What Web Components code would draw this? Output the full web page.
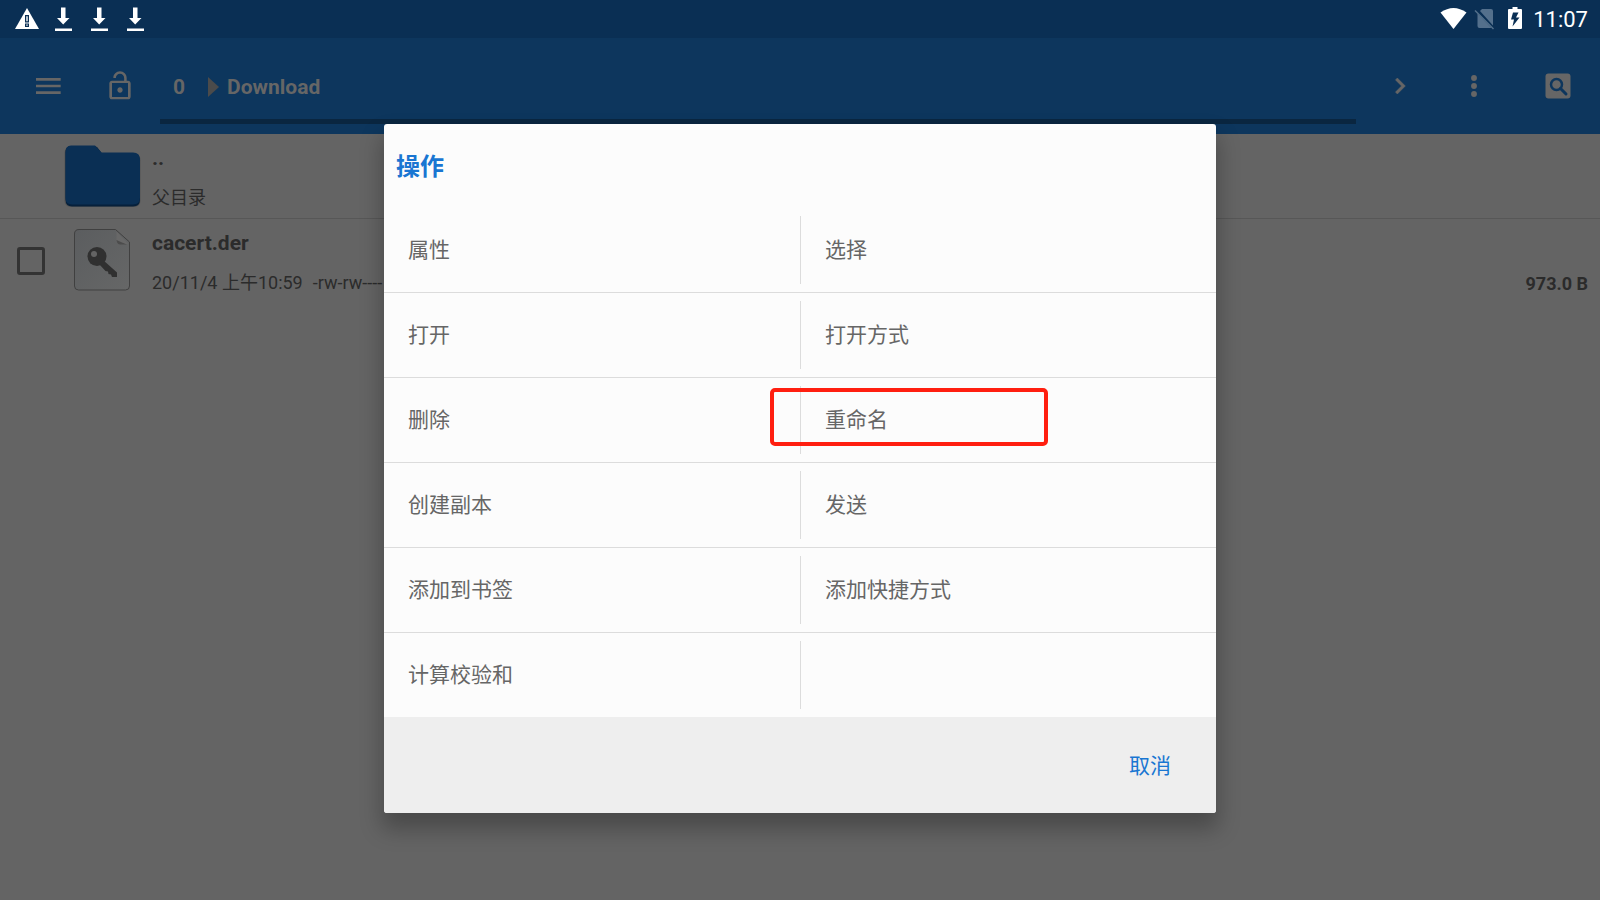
<!DOCTYPE html>
<html lang="zh-CN">
<head>
<meta charset="utf-8">
<meta name="viewport" content="width=device-width, initial-scale=1">
<title>Download</title>
<style>
  html, body { margin: 0; height: 100%; }
  body {
    background: #646464;
    font-family: Roboto, "Noto Sans CJK SC", sans-serif;
    overflow: hidden;
  }
</style>
</head>
<body>
<file-manager></file-manager>

<template id="t-manager">
  <style>
    :host { display: flex; flex-direction: column; min-height: 100vh; position: relative; }
    main { flex: 1; }
  </style>
  <status-bar></status-bar>
  <app-bar></app-bar>
  <main>
    <file-row divided>
      <svg slot="icon" width="80" height="72" viewBox="-1 -4 80 72" aria-hidden="true">
        <path d="M8 3.500h24l7 7.500h32q6.500 0 6.500 6.500v40q0 6.500-6.500 6.500H8q-6.500 0-6.500-6.500V10q0-6.500 6.500-6.500z" transform="translate(0 -1)" fill="#3c3c3c" opacity=".4"/>
        <path d="M8 2h23q2 0 3.500 1.500L39 9.500h31q7 0 7 7v39q0 7-7 7H9q-6.500 0-6.500-7V8.500Q2.500 2 8 2z" fill="#06203b"/>
        <path d="M8 1.500h24l6.500 7H70q7 0 7 7v38q0 7-7 7H9q-6.500 0-6.500-7v-45q0-7 5.500-7z" fill="#0a2f54"/>
      </svg>
      <span slot="name">..</span>
      <span slot="info">父目录</span>
    </file-row>
    <file-row selectable>
      <svg slot="icon" width="60" height="68" viewBox="0 0 60 68" aria-hidden="true">
        <defs><linearGradient id="paper" x1="0" y1="0" x2="1" y2="1"><stop offset="0" stop-color="#5b5d5f"/><stop offset="1" stop-color="#666767"/></linearGradient></defs>
        <path d="M7 2.500h36.500L57.500 15v44q0 4-4 4h-47q-4 0-4-4V7q0-4.500 4.500-4.500z" fill="url(#paper)" stroke="#404040" stroke-width="1"/>
        <path d="M44.500 4.500V13q0 4 3 4h9z" fill="#686868"/>
        <path d="M44.500 13q.5 4.500 4 4.500H55l-5-2z" fill="#4c4c4c"/>
        <circle cx="25" cy="29.500" r="9.500" fill="#303030"/>
        <path d="M31 33l14 12.500v4.500h-5l-1-2.500-2.500-.5-.5-2.500-2.500-.5L27 37z" fill="#303030"/>
        <circle cx="22" cy="27" r="3" fill="#646464"/>
      </svg>
      <span slot="name">cacert.der</span>
      <span slot="info">20/11/4 上午10:59</span>
      <span slot="mode">-rw-rw----</span>
      <span slot="size">973.0 B</span>
    </file-row>
  </main>
  <action-dialog heading="操作"></action-dialog>
</template>

<template id="t-status">
  <style>
    :host { display: flex; align-items: center; justify-content: space-between; height: 38px; padding: 0 12px 0 9px; background: #0a2f54; color: #fff; }
    div { display: flex; align-items: center; }
    svg { display: block; }
    time { font-size: 22px; line-height: 26px; margin-left: 4px; padding-top: 2px; }
  </style>
  <div>
    <svg width="36" height="38" viewBox="0 0 36 38" role="img" aria-label="警告"><path d="M18 8L30 29H6z" fill="#fff"/><path d="M16 15h4v7.500h-4zM16 23.500h4V27h-4z" fill="#0a2f54"/><path d="M17.300 16.300h1.400v5h-1.400zM17.300 24.500h1.400v1.300h-1.400z" fill="#fff"/></svg>
    <svg width="36" height="38" viewBox="0 0 36 38" role="img" aria-label="下载"><path d="M16 7.500h4.500V18h4L18.200 24.500 12 18h4zM10 28.500h17v2.500H10z" fill="#fff"/></svg>
    <svg width="36" height="38" viewBox="0 0 36 38" role="img" aria-label="下载"><path d="M16 7.500h4.500V18h4L18.200 24.500 12 18h4zM10 28.500h17v2.500H10z" fill="#fff"/></svg>
    <svg width="36" height="38" viewBox="0 0 36 38" role="img" aria-label="下载"><path d="M16 7.500h4.500V18h4L18.200 24.500 12 18h4zM10 28.500h17v2.500H10z" fill="#fff"/></svg>
  </div>
  <div>
    <svg width="32" height="38" viewBox="0 0 32 38" role="img" aria-label="WLAN"><path d="M15.500 29L2.500 12.500Q15.500 3.500 28.500 12.500z" fill="#fff"/></svg>
    <svg width="31" height="38" viewBox="0 0 31 38" role="img" aria-label="无 SIM 卡"><path d="M10 11l2-2h9q2 0 2 2v14.500zM7.500 13.500L21.500 28H9.500q-2 0-2-2z" fill="#54708c"/><path d="M5 10.500L23.500 29" stroke="#54708c" stroke-width="1.500"/></svg>
    <svg width="28" height="38" viewBox="0 0 28 38" role="img" aria-label="正在充电"><path d="M11.500 7h5v2H20q1 0 1 1v18q0 1-1 1H8q-1 0-1-1V10q0-1 1-1h3.500z" fill="#fff"/><path d="M12 12.500h5.500L15 17.500h3.500L11.500 26.500l1.500-7h-3z" fill="#0a2f54"/></svg>
    <time datetime="11:07">11:07</time>
  </div>
</template>

<template id="t-appbar">
  <style>
    :host { display: grid; grid-template-columns: 96px 48px 1fr 88px 60px 96px; height: 96px; background: #0d365d; color: #666; }
    button { border: 0; margin: 0; padding: 0; background: none; color: inherit; display: flex; align-items: center; justify-content: center; }
    button:last-of-type { padding-left: 12px; }
    svg { display: block; fill: currentColor; }
    nav { display: flex; align-items: center; gap: 8px; margin: 0 0 10px 16px; padding: 16px 13px 0; border-bottom: 5px solid #0a2640; font-size: 21px; line-height: 24px; font-weight: 700; }
    nav svg { margin-left: 15px; fill: #4b4b4b; }
    a { color: inherit; text-decoration: none; }
  </style>
  <button type="button" aria-label="菜单"><svg width="32" height="32" viewBox="0 0 24 24"><path d="M3 6h18.500v2H3zM3 11h18.500v2H3zM3 16h18.500v2H3z"/></svg></button>
  <button type="button" aria-label="锁定"><svg width="32" height="32" viewBox="0 0 24 24"><path d="M12 17c1.100 0 2-.9 2-2s-.9-2-2-2-2 .9-2 2 .9 2 2 2zm6-9h-1V6c0-2.760-2.240-5-5-5S7 3.240 7 6h1.900c0-1.710 1.390-3.100 3.100-3.100 1.710 0 3.100 1.390 3.100 3.100v2H6c-1.100 0-2 .9-2 2v10c0 1.100.9 2 2 2h12c1.100 0 2-.9 2-2V10c0-1.100-.9-2-2-2zm0 12.200H6V9.800h12v10.400z"/></svg></button>
  <nav aria-label="路径">
    <a href="#0">0</a>
    <svg width="11" height="20" viewBox="0 0 11 20" aria-hidden="true"><path d="M0 0l11 10L0 20z"/></svg>
    <a href="#download">Download</a>
  </nav>
  <button type="button" aria-label="前进"><svg width="32" height="32" viewBox="0 0 24 24"><path d="M10 6L8.590 7.410 13.170 12l-4.580 4.590L10 18l6-6z" stroke="currentColor" stroke-width=".4"/></svg></button>
  <button type="button" aria-label="更多"><svg width="32" height="32" viewBox="0 0 24 24"><circle cx="12" cy="6" r="2.200"/><circle cx="12" cy="12" r="2.200"/><circle cx="12" cy="18" r="2.200"/></svg></button>
  <button type="button" aria-label="搜索"><svg width="26" height="26" viewBox="0 0 26 26"><rect x=".5" y=".5" width="25" height="25" rx="3"/><circle cx="11.500" cy="11.500" r="5.500" fill="none" stroke="#0d365d" stroke-width="2.500"/><path d="M15.500 15.500l5.500 5.500" stroke="#0d365d" stroke-width="3" stroke-linecap="round"/></svg></button>
</template>

<template id="t-row">
  <style>
    :host { display: grid; grid-template-columns: 62px 80px 1fr auto; height: 84px; color: #2b2b2b; }
    :host([divided]) { border-bottom: 1px solid #575757; }
    label { display: flex; align-items: center; padding-left: 17px; }
    input { appearance: none; box-sizing: border-box; width: 28px; height: 28px; margin: 0; border: 3px solid #333; border-radius: 3px; }
    .icon { display: flex; align-items: center; justify-content: center; }
    .text { display: flex; flex-direction: column; gap: 16px; padding: 12px 0 8px 10px; }
    .name { font-size: 21px; line-height: 24px; font-weight: 700; }
    .info { display: flex; gap: 10px; font-size: 18px; line-height: 24px; }
    .size { padding: 53px 12px 0 0; font-size: 18px; line-height: 24px; font-weight: 700; }
  </style>
  <label></label>
  <div class="icon"><slot name="icon"></slot></div>
  <div class="text">
    <div class="name"><slot name="name"></slot></div>
    <div class="info"><slot name="info"></slot><slot name="mode"></slot></div>
  </div>
  <div class="size"><slot name="size"></slot></div>
</template>

<template id="t-dialog">
  <style>
    :host { position: absolute; inset: 0; display: flex; align-items: center; justify-content: center; padding-top: 37px; }
    section { width: 52%; border-radius: 3px; background: #fcfcfc; box-shadow: 0 14px 22px 2px rgba(0, 0, 0, .27); }
    h2 { margin: 0; padding: 25px 12px 23px; font-size: 24px; line-height: 36px; font-weight: 700; color: #1976d2; }
    .grid { display: grid; grid-template-columns: 1fr 1fr; }
    footer { display: flex; justify-content: flex-end; padding: 25px 32px 23px; background: #eee; border-radius: 0 0 3px 3px; }
    footer button { border: 0; margin: 0; padding: 0 13px; background: none; font-family: inherit; font-size: 21px; line-height: 48px; color: #1976d2; }
  </style>
  <section role="dialog" aria-modal="true" aria-labelledby="title">
    <h2 id="title"></h2>
    <div class="grid">
      <action-item>属性</action-item><action-item end>选择</action-item>
      <action-item>打开</action-item><action-item end>打开方式</action-item>
      <action-item>删除</action-item><action-item end marked>重命名</action-item>
      <action-item>创建副本</action-item><action-item end>发送</action-item>
      <action-item>添加到书签</action-item><action-item end>添加快捷方式</action-item>
      <action-item last>计算校验和</action-item><action-item end last empty></action-item>
    </div>
    <footer><button type="button">取消</button></footer>
  </section>
</template>

<template id="t-item">
  <style>
    :host { display: flex; position: relative; padding: 8px 0; border-bottom: 1px solid #dcdcdc; }
    :host([last]) { border-bottom: 0; }
    button, .blank { flex: 1; height: 68px; box-sizing: border-box; border: 0; margin: 0; padding: 0 24px; background: none; text-align: left; font-family: inherit; font-size: 21px; line-height: 32px; color: #666; }
    :host([end]) button, :host([end]) .blank { border-left: 1px solid #dcdcdc; }
    .mark { position: absolute; left: -30px; top: 10px; box-sizing: border-box; width: 278px; height: 58px; border: 4px solid #ff1f10; border-radius: 5px; pointer-events: none; }
  </style>
</template>

<script>
  const stamp = (el, id) => {
    const root = el.attachShadow({ mode: 'open' });
    root.append(document.getElementById(id).content.cloneNode(true));
    return root;
  };

  customElements.define('status-bar', class extends HTMLElement {
    constructor() { super(); stamp(this, 't-status'); }
  });

  customElements.define('app-bar', class extends HTMLElement {
    constructor() { super(); stamp(this, 't-appbar'); }
  });

  customElements.define('file-row', class extends HTMLElement {
    connectedCallback() {
      if (this.shadowRoot) return;
      const root = stamp(this, 't-row');
      if (this.hasAttribute('selectable')) {
        const box = document.createElement('input');
        box.type = 'checkbox';
        box.setAttribute('aria-label', this.querySelector('[slot=name]').textContent);
        root.querySelector('label').append(box);
      }
    }
  });

  customElements.define('action-item', class extends HTMLElement {
    connectedCallback() {
      if (this.shadowRoot) return;
      const root = stamp(this, 't-item');
      if (this.hasAttribute('empty')) {
        const blank = document.createElement('div');
        blank.className = 'blank';
        root.append(blank);
        return;
      }
      const button = document.createElement('button');
      button.type = 'button';
      button.append(document.createElement('slot'));
      root.append(button);
      if (this.hasAttribute('marked')) {
        const mark = document.createElement('div');
        mark.className = 'mark';
        root.append(mark);
      }
    }
  });

  customElements.define('action-dialog', class extends HTMLElement {
    connectedCallback() {
      if (this.shadowRoot) return;
      stamp(this, 't-dialog').getElementById('title').textContent = this.getAttribute('heading');
    }
  });

  customElements.define('file-manager', class extends HTMLElement {
    constructor() { super(); stamp(this, 't-manager'); }
  });
</script>
</body>
</html>
